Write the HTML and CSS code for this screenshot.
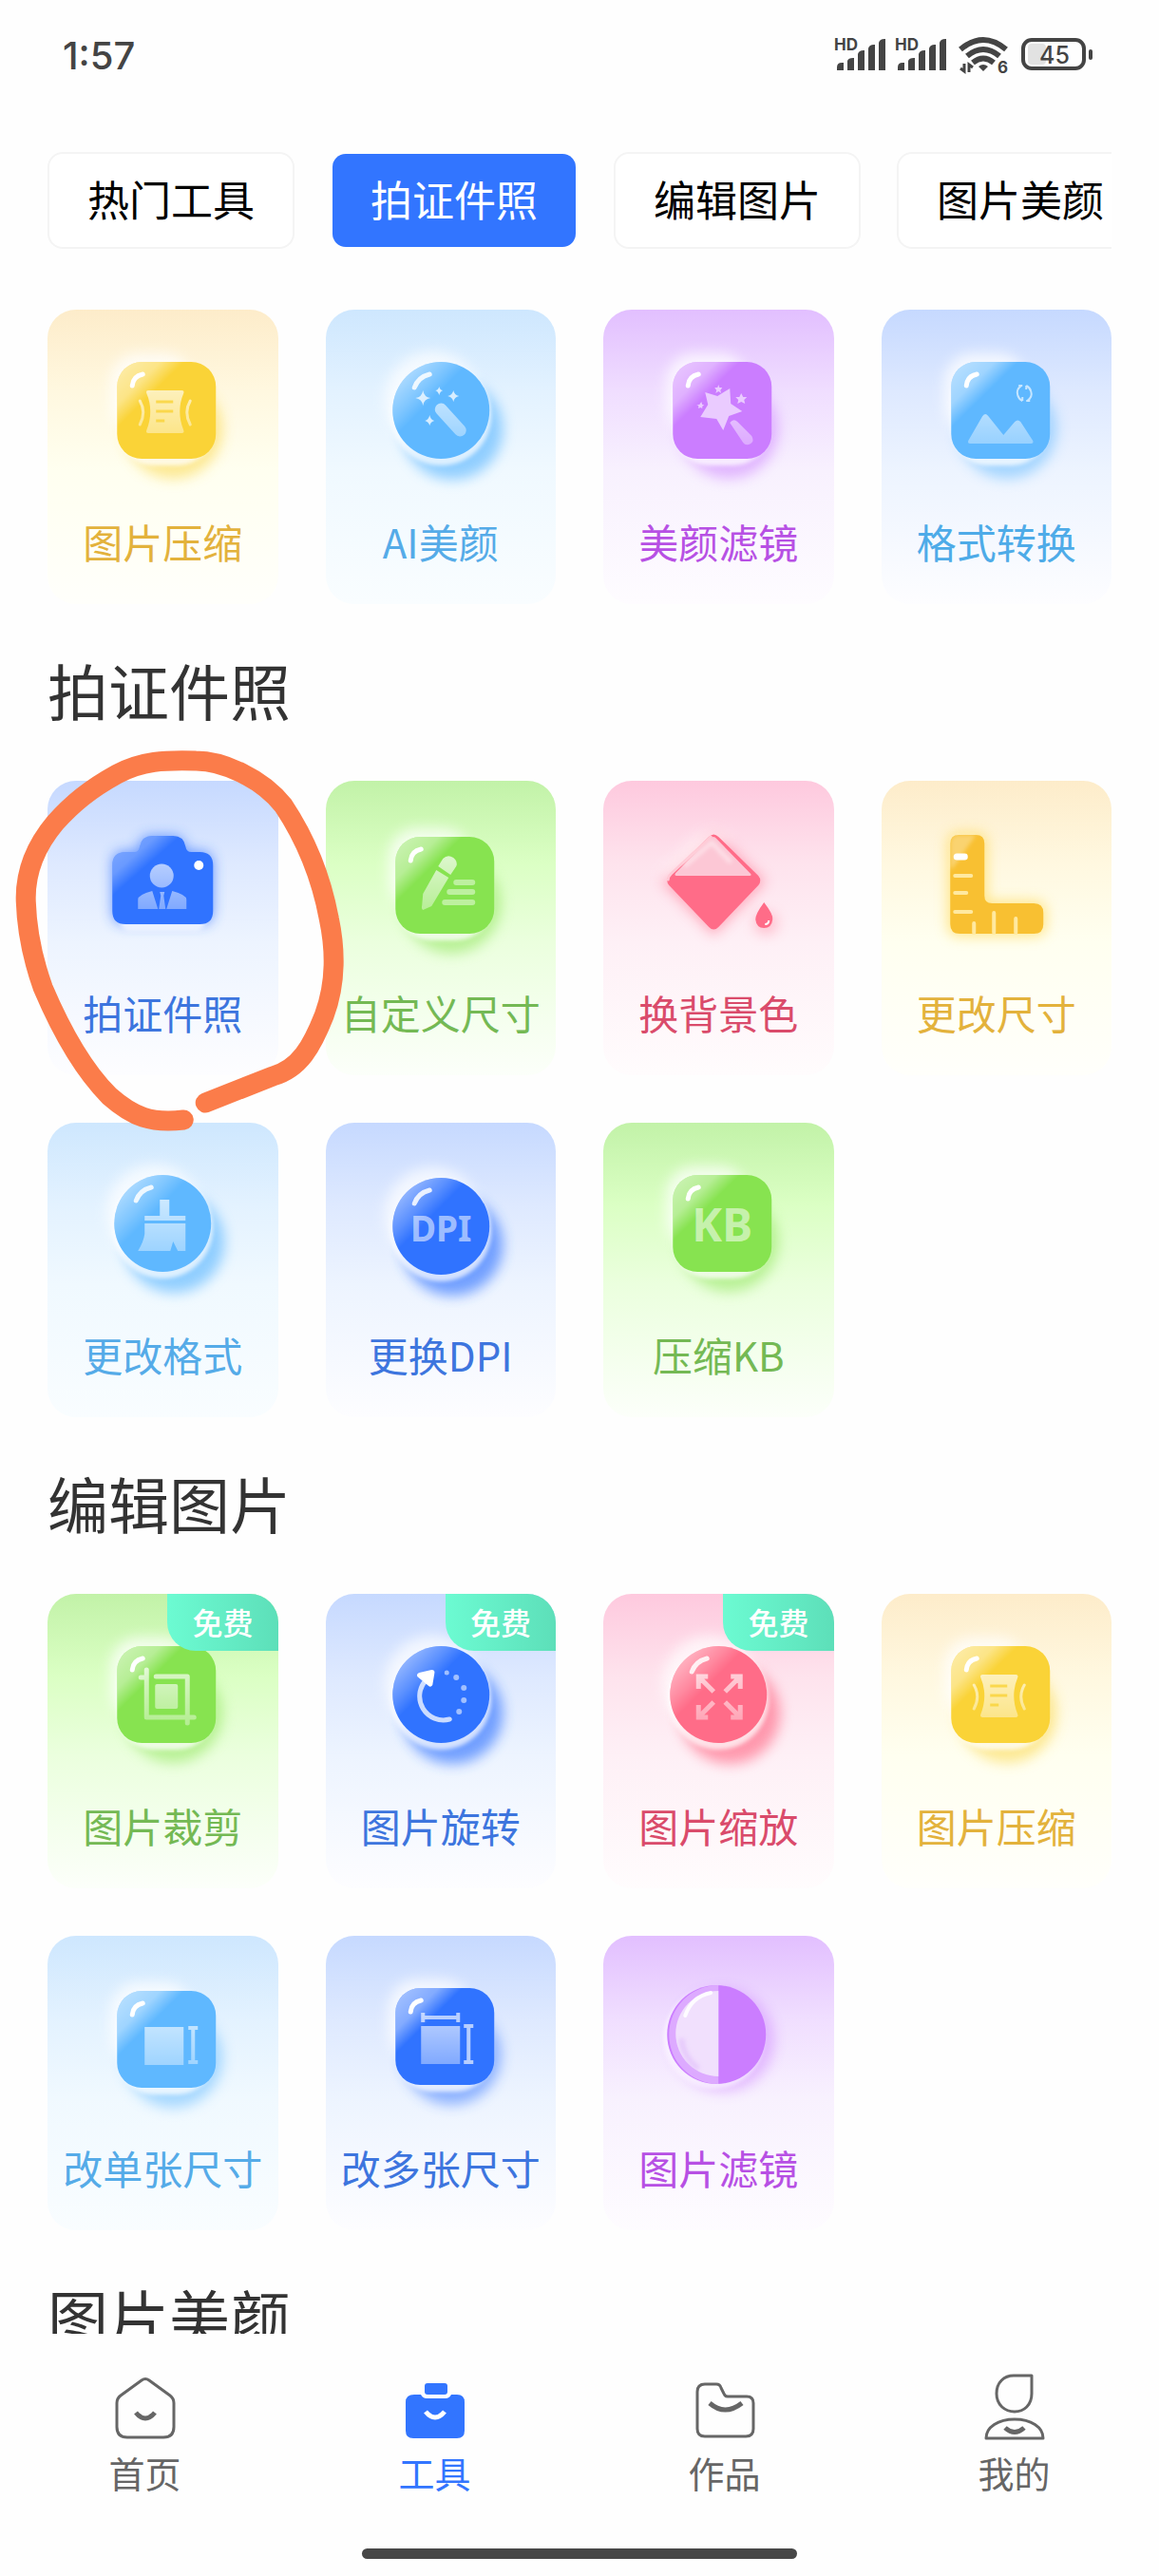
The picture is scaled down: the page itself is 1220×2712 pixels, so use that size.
FILE: index.html
```html
<!DOCTYPE html>
<html lang="zh-CN">
<head>
  <meta charset="utf-8" />
  <title>工具</title>
  <meta name="viewport" content="width=device-width, initial-scale=1.0" />
  <link rel="stylesheet" href="styles.css">
</head>

<body>
  <!-- shared icon parts -->
  <svg class="defs" aria-hidden="true">
    <defs>
      <filter id="blur" x="-50%" y="-50%" width="200%" height="200%"><feGaussianBlur stdDeviation="7" /></filter>
      <filter id="soft" x="-30%" y="-30%" width="160%" height="160%"><feGaussianBlur stdDeviation="2" /></filter>
      <linearGradient id="glass" gradientUnits="userSpaceOnUse" x1="0" y1="78" x2="0" y2="142">
        <stop offset="0" stop-color="#fff" stop-opacity=".7" />
        <stop offset="1" stop-color="#fff" stop-opacity=".35" />
      </linearGradient>
      <linearGradient id="shine" x1="0" y1="0" x2="1" y2="1">
        <stop offset="0" stop-color="#fff" stop-opacity=".6" />
        <stop offset=".22" stop-color="#fff" stop-opacity=".4" />
        <stop offset=".34" stop-color="#fff" stop-opacity="0" />
      </linearGradient>
      <linearGradient id="bubble" x1="0" y1="0" x2="1" y2="1">
        <stop offset=".12" stop-color="#fff" stop-opacity=".5" />
        <stop offset=".3" stop-color="#fff" stop-opacity=".2" />
        <stop offset=".4" stop-color="#fff" stop-opacity="0" />
      </linearGradient>

      <g id="square">
        <circle cx="132" cy="126" r="52" fill="currentColor" opacity=".5" filter="url(#blur)" />
        <rect x="66" y="46" width="86" height="86" rx="30" fill="#fff" opacity=".75" filter="url(#blur)" />
        <rect x="73" y="60" width="102" height="104" rx="38" fill="#fff" opacity=".75" filter="url(#soft)" />
        <rect x="73" y="55" width="104" height="102" rx="26" fill="currentColor" />
        <rect x="73" y="55" width="104" height="102" rx="26" fill="url(#shine)" />
        <path d="M89 80q1-10 11-12" fill="none" stroke="#fff" stroke-width="5" stroke-linecap="round" />
      </g>

      <g id="circle">
        <circle cx="133" cy="126" r="53" fill="currentColor" opacity=".65" filter="url(#blur)" />
        <circle cx="112" cy="94" r="50" fill="#fff" opacity=".7" filter="url(#blur)" />
        <circle cx="121" cy="111" r="53" fill="#fff" opacity=".7" filter="url(#soft)" />
        <circle cx="121" cy="106" r="51" fill="currentColor" />
        <circle cx="121" cy="106" r="51" fill="url(#bubble)" />
        <path d="M93 82q4-11 16-14" fill="none" stroke="#fff" stroke-opacity=".85" stroke-width="5" stroke-linecap="round" />
      </g>

      <g id="compress">
        <use href="#square" />
        <path d="M106 85h35q3 0 2 3-8 19 0 39 1 3-2 3h-35q-3 0-2-3 8-20 0-39-1-3 2-3z" fill="url(#glass)" />
        <path d="M114 97h18M114 107h18M114 117h9" stroke="currentColor" stroke-width="3" opacity=".8" />
        <path d="M97 96q7 12 0 25M150 96q-7 12 0 25" fill="none" stroke="url(#glass)" stroke-width="3" stroke-linecap="round" />
      </g>

      <g id="signal">
        <text x="4" y="17" class="hd">HD</text>
        <path d="M7 38v-3q0-5 5-5h2v8zM18 38V28q1-3 6-3h1v13zM29 38V21q1-4 6-4h1v21zM40 38V15q1-4 6-4h1v27zM51 38V9q1-4 6-4h1v33z" />
      </g>
    </defs>
  </svg>

  <header class="status-bar">
    <span class="time">1:57</span>
    <svg class="status-icons" viewBox="0 0 280 44" aria-label="信号 电量 45%">
      <g fill="#444">
        <use href="#signal" />
        <use href="#signal" x="64" />
        <path d="M156 34q5-4 10 0l-5 5z" />
        <path d="M141 31v8l-4-3M146 40v-8l4 3" fill="none" stroke="#444" stroke-width="3" />
        <text x="176" y="41" class="hd">6</text>
        <rect x="272" y="16" width="4" height="11" rx="2" />
      </g>
      <g fill="none" stroke="#444" stroke-width="6">
        <path d="M137 16q24-20 48 0" />
        <path d="M144 23q17-14 34 0" />
        <path d="M150 30q11-9 22 0" />
      </g>
      <rect x="208" y="10" width="19" height="22" rx="4" fill="#e2e2e2" />
      <rect x="203" y="6" width="64" height="30" rx="9" fill="none" stroke="#444" stroke-width="4" />
      <text x="236" y="31" class="level" text-anchor="middle">45</text>
    </svg>
  </header>

  <nav class="tabs">
    <button type="button" class="tab">热门工具</button>
    <button type="button" class="tab active">拍证件照</button>
    <button type="button" class="tab">编辑图片</button>
    <button type="button" class="tab">图片美颜</button>
  </nav>

  <main class="content">
    <section class="cards">
      <button type="button" class="card yellow">
        <svg class="icon" viewBox="0 0 242 216"><use href="#compress" /></svg>
        <span class="label">图片压缩</span>
      </button>
      <button type="button" class="card sky">
        <svg class="icon" viewBox="0 0 242 216">
          <use href="#circle" />
          <path d="M121 105l20 22" stroke="url(#glass)" stroke-width="13" stroke-linecap="round" />
          <path fill="#fff" fill-opacity=".75" d="M102 85q1 7 8 8-7 1-8 8-1-7-8-8 7-1 8-8zM119 81q1 4 4 4-3 1-4 5-1-4-4-5 3 0 4-4zM134 85q1 5 6 6-5 1-6 6-1-5-6-6 5-1 6-6zM109 111q1 5 5 6-4 1-5 5-1-4-5-5 4-1 5-6z" />
        </svg>
        <span class="label">AI美颜</span>
      </button>
      <button type="button" class="card purple">
        <svg class="icon" viewBox="0 0 242 216">
          <use href="#square" />
          <path d="M107 87l13 4 13-8 1 16 12 8-14 5-6 15-7-12-17-2 8-13z" fill="#fff" fill-opacity=".6" />
          <path d="M133 119q4-5 8-1l15 15q3 5-1 8-5 3-8-1z" fill="url(#glass)" />
          <path fill="#fff" fill-opacity=".6" d="M121 79l1 3h3l-2 3 1 3-3-2-3 2 1-3-2-3h3zM145 88l2 4h4l-3 3 1 4-4-2-4 2 1-4-3-3h4zM103 97l1 3h2l-2 2v2l-2-1-2 1v-3l-2-1h3z" />
        </svg>
        <span class="label">美颜滤镜</span>
      </button>
      <button type="button" class="card blue sky-icon">
        <svg class="icon" viewBox="0 0 242 216">
          <use href="#square" />
          <path d="M93 141q-3 0-2-3l15-26q3-4 6 0l16 20 12-14q3-3 6 0l13 20q1 3-2 3z" fill="url(#glass)" />
          <path d="M147 80q-6 4-4 10 1 4 5 6M153 96q6-4 4-10-1-4-5-6M148 80h-4M152 96h4M152 80v4M148 96v-4" fill="none" stroke="#fff" stroke-opacity=".65" stroke-width="2" />
        </svg>
        <span class="label">格式转换</span>
      </button>
    </section>

    <h2 class="title">拍证件照</h2>
    <section class="cards">
      <button type="button" class="card blue marked">
        <svg class="icon" viewBox="0 0 242 216">
          <path d="M80 74h14q3-16 14-16h24q12 0 14 16h14q14 0 14 14v49q0 14-14 14H82q-14 0-14-14V88q0-14 12-14z" fill="currentColor" opacity=".7" filter="url(#blur)" />
          <rect x="76" y="136" width="90" height="22" rx="10" fill="#fff" opacity=".7" filter="url(#soft)" />
          <path d="M82 75h10q4 0 5-6 2-11 13-11h22q11 0 13 11 1 6 6 6h9q14 0 14 14v48q0 14-14 14H82q-14 0-14-14V89q0-14 14-14z" fill="currentColor" />
          <path d="M82 75h10q4 0 5-6 2-11 13-11h22q11 0 13 11 1 6 6 6h9q14 0 14 14v48q0 14-14 14H82q-14 0-14-14V89q0-14 14-14z" fill="url(#shine)" opacity=".7" />
          <circle cx="120" cy="100" r="12.500" fill="url(#glass)" />
          <path d="M110 116l6 19H95v-10q0-5 15-9zM131 116l-6 19h21v-10q0-5-15-9zM118 117h5l-1 4 2 14h-7l2-14z" fill="url(#glass)" />
          <circle cx="159" cy="89" r="5" fill="#fff" />
        </svg>
        <span class="label">拍证件照</span>
        <svg class="hand-circle" viewBox="0 0 242 310" aria-hidden="true">
          <path d="M166 339L237 311C265 303 278 280 291 247C304 212 303 178 296 145C287 97 270 59 248 26C225-3 184-21 156-21C123-22 99-21 73-7C44 9 26 24 8 44C-13 69-24 98-23 127C-22 158-15 190-5 218C15 265 40 307 65 332C90 354 109 361 143 357" />
        </svg>
      </button>
      <button type="button" class="card green">
        <svg class="icon" viewBox="0 -4 242 216">
          <use href="#square" />
          <path d="M116 90l13 8-18 30-9 4q-2-1-1-5l1-12zM118 86l5-8q5-5 11-1 5 4 3 9l-6 9z" fill="url(#glass)" />
          <path d="M137 103h17M130 113h24M125 124h29" stroke="#fff" stroke-opacity=".45" stroke-width="6" stroke-linecap="round" />
        </svg>
        <span class="label">自定义尺寸</span>
      </button>
      <button type="button" class="card pink">
        <svg class="icon" viewBox="3 0 242 216">
          <path d="M119 60l48 46-48 50-48-50z" fill="currentColor" stroke="currentColor" stroke-width="10" opacity=".5" filter="url(#blur)" />
          <path d="M98 60l20-10 20 10-60 42-18-2z" fill="#fff" opacity=".6" filter="url(#blur)" />
          <path d="M114 59q5-5 10 0l42 41q4 5 0 10l-42 44q-5 5-10 0l-42-44q-4-5 0-10z" fill="currentColor" />
          <path d="M114 61q5-4 8 0l36 37q1 2-1 2H80q-3 0-1-3z" fill="#fcc7d5" />
          <path d="M71 104q0-3 3-6l42-39" fill="none" stroke="#ffc9d5" stroke-width="3" stroke-linecap="round" />
          <path d="M88 90l29-25 20 21" fill="none" stroke="#fff" stroke-width="4" opacity=".5" filter="url(#soft)" />
          <circle cx="174" cy="150" r="12" fill="currentColor" opacity=".35" filter="url(#blur)" />
          <path d="M172 128q10 13 9 18-1 9-9 9t-9-9q0-6 9-18z" fill="currentColor" />
          <path d="M173 151q4 0 4-4" fill="none" stroke="#fff" stroke-width="2" />
        </svg>
        <span class="label">换背景色</span>
      </button>
      <button type="button" class="card yellow ruler">
        <svg class="icon" viewBox="4 0 242 216">
          <path d="M76 66q0-9 9-9h18q9 0 9 9v55q0 8 8 8h44q10 0 10 10v12q0 10-10 10H86q-10 0-10-10z" fill="#ffd84d" stroke="#ffd84d" stroke-width="6" opacity=".6" filter="url(#blur)" />
          <path d="M76 66q0-9 9-9h18q9 0 9 9v55q0 8 8 8h44q10 0 10 10v12q0 10-10 10H86q-10 0-10-10z" fill="currentColor" />
          <path d="M76 66q0-9 9-9h18L80 90l-4 4z" fill="#fff" opacity=".3" filter="url(#soft)" />
          <path d="M83 80h8" stroke="#fff" stroke-width="7" stroke-linecap="round" />
          <path d="M81 100h17M81 118h12M81 138h17M101 150v10M122 139v21M145 145v15" stroke="#ffe9a0" stroke-width="4" stroke-linecap="round" />
        </svg>
        <span class="label">更改尺寸</span>
      </button>
      <button type="button" class="card sky">
        <svg class="icon" viewBox="0 0 242 216">
          <use href="#circle" />
          <path d="M118 81h10v17h17v5h-43v-5h16zM102 106h43v29h-8l-5-10-3 10H95q6-10 7-18z" fill="url(#glass)" />
        </svg>
        <span class="label">更改格式</span>
      </button>
      <button type="button" class="card blue">
        <svg class="icon" viewBox="0 -3 242 216">
          <use href="#circle" />
          <text x="121" y="122" class="dpi" text-anchor="middle">DPI</text>
        </svg>
        <span class="label">更换DPI</span>
      </button>
      <button type="button" class="card green">
        <svg class="icon" viewBox="0 0 242 216">
          <use href="#square" />
          <text x="125" y="125" class="kb" text-anchor="middle">KB</text>
        </svg>
        <span class="label">压缩KB</span>
      </button>
    </section>

    <h2 class="title">编辑图片</h2>
    <section class="cards">
      <button type="button" class="card green">
        <svg class="icon" viewBox="0 0 242 216">
          <use href="#square" />
          <rect x="113" y="95" width="24" height="26" rx="2" fill="url(#glass)" />
          <path d="M98 88h6M104 80v50h50M114 87h33v49" fill="none" stroke="url(#glass)" stroke-width="5" stroke-linecap="round" stroke-linejoin="round" />
        </svg>
        <span class="label">图片裁剪</span>
        <span class="badge">免费</span>
      </button>
      <button type="button" class="card blue">
        <svg class="icon" viewBox="0 0 242 216">
          <circle cx="133" cy="126" r="53" fill="currentColor" opacity=".65" filter="url(#blur)" />
          <circle cx="112" cy="94" r="50" fill="#fff" opacity=".7" filter="url(#blur)" />
          <circle cx="121" cy="111" r="53" fill="#fff" opacity=".7" filter="url(#soft)" />
          <circle cx="121" cy="106" r="51" fill="currentColor" />
          <circle cx="121" cy="106" r="51" fill="url(#bubble)" />
          <path d="M105 91a25 25 0 0 0 25 41" fill="none" stroke="#fff" stroke-opacity=".75" stroke-width="5" stroke-linecap="round" />
          <path d="M98 83l13-3q4 0 3 4l-2 12q-2 3-4 1L96 87q-1-3 2-4z" fill="#fff" />
          <g fill="#fff" fill-opacity=".55"><circle cx="127" cy="83" r="2.500" /><circle cx="137" cy="88" r="3" /><circle cx="145" cy="99" r="3" /><circle cx="145" cy="112" r="3" /><circle cx="140" cy="124" r="3" /></g>
        </svg>
        <span class="label">图片旋转</span>
        <span class="badge">免费</span>
      </button>
      <button type="button" class="card pink">
        <svg class="icon" viewBox="0 0 242 216">
          <use href="#circle" />
          <path d="M110 87h-10v13M100 87l16 16M134 87h10v13M144 87l-16 16M110 130h-10v-13M100 130l16-16M134 130h10v-13M144 130l-16-16" fill="none" stroke="url(#glass)" stroke-width="5" />
        </svg>
        <span class="label">图片缩放</span>
        <span class="badge">免费</span>
      </button>
      <button type="button" class="card yellow">
        <svg class="icon" viewBox="0 0 242 216"><use href="#compress" /></svg>
        <span class="label">图片压缩</span>
      </button>
      <button type="button" class="card sky">
        <svg class="icon" viewBox="0 -3 242 216">
          <use href="#square" />
          <rect x="102" y="93" width="41" height="40" fill="url(#glass)" />
          <path d="M153 93v38M148 94h10M148 130h10" fill="none" stroke="url(#glass)" stroke-width="4" />
        </svg>
        <span class="label">改单张尺寸</span>
      </button>
      <button type="button" class="card blue">
        <svg class="icon" viewBox="0 0 242 216">
          <use href="#square" />
          <rect x="100" y="95" width="41" height="40" fill="url(#glass)" />
          <path d="M150 94v40M145 95h10M145 133h10M102 86h38M102 81v10M139 81v10" fill="none" stroke="#fff" stroke-opacity=".65" stroke-width="4" />
        </svg>
        <span class="label">改多张尺寸</span>
      </button>
      <button type="button" class="card purple">
        <svg class="icon" viewBox="0 0 242 216">
          <circle cx="126" cy="110" r="54" fill="currentColor" opacity=".45" filter="url(#blur)" />
          <circle cx="116" cy="108" r="53" fill="#fff" opacity=".6" filter="url(#soft)" />
          <circle cx="119" cy="104" r="52" fill="currentColor" />
          <path d="M121 52a52 52 0 0 0 0 104z" fill="#fff" opacity=".35" />
          <path d="M121 58v90a45 45 0 0 1 0-90z" fill="#f1e0fd" />
          <path d="M86 84q7-20 27-24" fill="none" stroke="#fff" stroke-width="4" stroke-linecap="round" opacity=".9" />
          <path d="M82 108q2 20 18 32" fill="none" stroke="#dcb4fa" stroke-width="6" opacity=".5" filter="url(#soft)" />
        </svg>
        <span class="label">图片滤镜</span>
      </button>
    </section>

    <h2 class="title">图片美颜</h2>
  </main>

  <footer class="bottom">
    <nav class="bottom-nav">
      <a href="#" class="nav-item">
        <svg class="nav-icon" viewBox="0 0 72 76">
          <path d="M32 10q4-3 8 0l22 16q4 3 4 8v25q0 11-11 11H17Q6 70 6 59V34q0-5 4-8z" />
          <path class="smile" d="M26 44q10 12 20 0" />
        </svg>
        首页
      </a>
      <a href="#" class="nav-item current">
        <svg class="nav-icon" viewBox="0 0 72 76">
          <rect class="solid" x="25" y="13" width="24" height="12" rx="3" />
          <path class="solid" d="M14 25h7q2 4 6 4h20q4 0 6-4h6q8 0 8 8v30q0 8-8 8H13q-8 0-8-8V33q0-8 9-8z" />
          <path class="smile" d="M26 43q10 12 20 0" />
        </svg>
        工具
      </a>
      <a href="#" class="nav-item">
        <svg class="nav-icon" viewBox="0 0 72 76">
          <path d="M15 14h12q4 0 5 4l3 6q1 3 4 3h20q7 0 7 7v27q0 8-8 8H15q-8 0-8-8V22q0-8 8-8z" />
          <path class="smile" d="M20 34q16 14 34 0" />
        </svg>
        作品
      </a>
      <a href="#" class="nav-item">
        <svg class="nav-icon" viewBox="0 0 72 76">
          <path d="M35 5h19v19c0 12-8 19-18 19s-19-7-19-19S25 5 35 5z" />
          <path d="M6 71c0-12 13-20 30-20s30 8 30 20z" />
          <path class="smile" d="M26 60q10 9 20 0" />
        </svg>
        我的
      </a>
    </nav>
    <div class="home-bar"></div>
  </footer>
</body>
</html>
```

FILE: styles.css
```css
html, body {
  margin: 0;
  padding: 0;
  height: 100%;
}

body {
  display: flex;
  flex-direction: column;
  overflow: hidden;
  background-color: #fefefe;
  font-family: "Noto Sans CJK SC", sans-serif;
  color: #333;
}

button {
  font-family: inherit;
  cursor: pointer;
}

.defs {
  position: absolute;
  width: 0;
  height: 0;
}

/* Status bar */
.status-bar {
  display: flex;
  justify-content: space-between;
  align-items: center;
  height: 116px;
  padding: 0 66px;
  flex-shrink: 0;
}

.time {
  font-family: Inter, sans-serif;
  font-size: 40px;
  font-weight: 500;
  color: #444;
}

.status-icons {
  width: 280px;
  height: 44px;
  overflow: visible;
}

.hd {
  font-family: Inter, sans-serif;
  font-size: 17px;
  font-weight: 700;
}

.level {
  font-family: Inter, sans-serif;
  font-size: 25px;
  font-weight: 500;
  fill: #444;
}

/* Category tabs */
.tabs {
  display: flex;
  gap: 38px;
  margin: 44px 50px 64px;
  overflow: hidden;
  flex-shrink: 0;
}

.tab {
  flex: none;
  padding: 0 40px 4px;
  border: 2px solid #f4f4f4;
  border-radius: 16px;
  background-color: #fff;
  background-clip: padding-box;
  font-size: 44px;
  line-height: 94px;
  color: #000;
}

.tab.active {
  border-color: transparent;
  background-color: #3275ff;
  color: #fff;
}

/* Tool cards */
.content {
  flex: 1;
  min-height: 0;
  padding: 0 50px;
  overflow: hidden;
}

.cards {
  display: grid;
  grid-template-columns: repeat(4, 1fr);
  gap: 50px;
}

.title {
  margin: 50px 0 58px;
  font-size: 64px;
  font-weight: 400;
  line-height: 78px;
}

.card {
  position: relative;
  display: flex;
  flex-direction: column;
  align-items: center;
  padding: 0 0 38px;
  border: none;
  border-radius: 30px;
  background: linear-gradient(var(--top), var(--upper) 28%, var(--lower) 55%, var(--bottom));
}

.icon {
  width: 100%;
  height: 216px;
  color: var(--icon);
}

.label {
  font-size: 42px;
  line-height: 56px;
  white-space: nowrap;
  color: var(--text);
}

.yellow {
  --top: #fdecca;
  --upper: #fff8e0;
  --lower: #fffff0;
  --bottom: #fffffb;
  --icon: #fad337;
  --text: #e3b23c;
}

.ruler {
  --icon: #f8c032;
}

.sky {
  --top: #cee7fe;
  --upper: #e3f2ff;
  --lower: #f0f9ff;
  --bottom: #f9fdff;
  --icon: #5fb8ff;
  --text: #55abe8;
}

.purple {
  --top: #e2bfff;
  --upper: #f0deff;
  --lower: #f8f1fe;
  --bottom: #fefcff;
  --icon: #cb7dff;
  --text: #b750e4;
}

.blue {
  --top: #c6d9ff;
  --upper: #dee9ff;
  --lower: #edf4ff;
  --bottom: #fdfdff;
  --icon: #3073ff;
  --text: #3d75de;
}

.sky-icon {
  --icon: #5fb8ff;
  --text: #4eabe8;
}

.green {
  --top: #c2f2a8;
  --upper: #dbffc4;
  --lower: #ebffde;
  --bottom: #fcfffa;
  --icon: #87e350;
  --text: #74b954;
}

.pink {
  --top: #fec9de;
  --upper: #fee3ed;
  --lower: #fef0f6;
  --bottom: #fffcfd;
  --icon: #ff6c88;
  --text: #da4b6b;
}

.dpi,
.kb {
  font-family: "Noto Sans", sans-serif;
  font-weight: 700;
  font-size: 37px;
  fill: #fff;
  fill-opacity: .55;
}

.kb {
  font-size: 48px;
}

.badge {
  position: absolute;
  top: 0;
  right: 0;
  padding: 0 26px 2px;
  border-radius: 0 30px 0 30px;
  background: linear-gradient(to right, #6cfbd2, #5ddfb9);
  font-size: 32px;
  font-weight: 500;
  line-height: 58px;
  color: #fff;
}

/* Hand drawn ring round the highlighted tool */
.marked {
  z-index: 1;
}

.hand-circle {
  position: absolute;
  top: 0;
  left: 0;
  width: 100%;
  height: 100%;
  overflow: visible;
  pointer-events: none;
  fill: none;
  stroke: #fb7c4a;
  stroke-width: 21px;
  stroke-linecap: round;
  stroke-linejoin: round;
}

/* Bottom navigation */
.bottom {
  position: relative;
  z-index: 2;
  flex-shrink: 0;
  padding: 39px 0 18px;
  background-color: #fefefe;
}

.bottom-nav {
  display: flex;
}

.nav-item {
  flex: 1;
  display: flex;
  flex-direction: column;
  align-items: center;
  gap: 8px;
  font-size: 38px;
  line-height: 46px;
  color: #666;
  text-decoration: none;
}

.nav-item.current {
  color: #3275ff;
}

.nav-icon {
  width: 72px;
  height: 76px;
  fill: none;
  stroke: currentColor;
  stroke-width: 3px;
  stroke-linejoin: round;
}

.nav-icon .smile {
  stroke-width: 5px;
}

.nav-icon .solid {
  fill: currentColor;
  stroke: none;
}

.current .smile {
  stroke: #fff;
}

.home-bar {
  width: 37.5%;
  height: 11px;
  margin: 57px auto 0;
  border-radius: 6px;
  background-color: #474747;
}
```
